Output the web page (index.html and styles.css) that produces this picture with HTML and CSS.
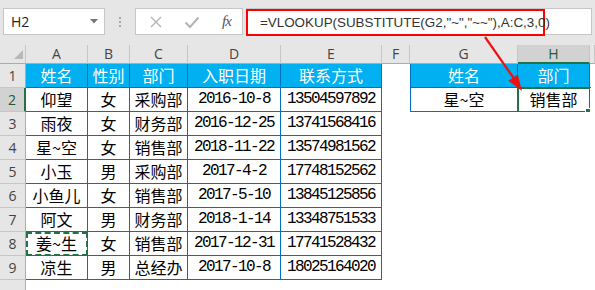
FILE: index.html
```html
<!DOCTYPE html>
<html lang="zh-CN">
<head>
<meta charset="utf-8">
<title>VLOOKUP</title>
<link rel="stylesheet" href="styles.css">
</head>
<body>
<div class="topbar">
  <div class="namebox"><span>H2</span><svg width="8" height="5" viewBox="0 0 8 5"><path d="M0 0H8L4 4.5Z" fill="#777"/></svg></div>
  <div class="sep"><i></i><i></i><i></i></div>
  <div class="fxbox">
    <svg class="ic" width="14" height="14" viewBox="0 0 14 14"><path d="M2 2L12 12M12 2L2 12" stroke="#b4b4b4" stroke-width="1.4" fill="none"/></svg>
    <svg class="ic" width="16" height="14" viewBox="0 0 16 14"><path d="M1.5 7.5L6 12L14.5 2.5" stroke="#b4b4b4" stroke-width="2" fill="none"/></svg>
    <span class="fx">fx</span>
  </div>
  <div class="formula"><div class="redbox">=VLOOKUP(SUBSTITUTE(G2,"~","~~"),A:C,3,0)</div></div>
</div>
<div class="sheet">
  <div class="corner"><svg width="9" height="9" viewBox="0 0 9 9"><path d="M9 0V9H0Z" fill="#b8b8b8"/></svg></div>
  <div class="ch">A</div><div class="ch">B</div><div class="ch">C</div><div class="ch">D</div><div class="ch">E</div><div class="ch">F</div><div class="ch">G</div><div class="ch sel">H</div><div class="ch"></div>

  <div class="rh">1</div>
  <div class="c th">姓名</div><div class="c th">性别</div><div class="c th">部门</div><div class="c th">入职日期</div><div class="c th">联系方式</div><div class="c"></div><div class="c th gl">姓名</div><div class="c th">部门</div><div class="c"></div>

  <div class="rh rsel">2</div>
  <div class="c t">仰望</div><div class="c t">女</div><div class="c t">采购部</div><div class="c t n">2016-10-8</div><div class="c t n">13504597892</div><div class="c"></div><div class="c t gl">星~空</div><div class="c t active">销售部<span class="handle"></span></div><div class="c"></div>

  <div class="rh">3</div>
  <div class="c t">雨夜</div><div class="c t">女</div><div class="c t">财务部</div><div class="c t n">2016-12-25</div><div class="c t n">13741568416</div><div class="c"></div><div class="c"></div><div class="c"></div><div class="c"></div>

  <div class="rh">4</div>
  <div class="c t">星~空</div><div class="c t">女</div><div class="c t">销售部</div><div class="c t n">2018-11-22</div><div class="c t n">13574981562</div><div class="c"></div><div class="c"></div><div class="c"></div><div class="c"></div>

  <div class="rh">5</div>
  <div class="c t">小玉</div><div class="c t">男</div><div class="c t">采购部</div><div class="c t n">2017-4-2</div><div class="c t n">17748152562</div><div class="c"></div><div class="c"></div><div class="c"></div><div class="c"></div>

  <div class="rh">6</div>
  <div class="c t">小鱼儿</div><div class="c t">女</div><div class="c t">销售部</div><div class="c t n">2017-5-10</div><div class="c t n">13845125856</div><div class="c"></div><div class="c"></div><div class="c"></div><div class="c"></div>

  <div class="rh">7</div>
  <div class="c t">阿文</div><div class="c t">男</div><div class="c t">财务部</div><div class="c t n">2018-1-14</div><div class="c t n">13348751533</div><div class="c"></div><div class="c"></div><div class="c"></div><div class="c"></div>

  <div class="rh">8</div>
  <div class="c t copy">姜~生</div><div class="c t">女</div><div class="c t">销售部</div><div class="c t n">2017-12-31</div><div class="c t n">17741528432</div><div class="c"></div><div class="c"></div><div class="c"></div><div class="c"></div>

  <div class="rh">9</div>
  <div class="c t">凉生</div><div class="c t">男</div><div class="c t">总经办</div><div class="c t n">2017-10-8</div><div class="c t n">18025164020</div><div class="c"></div><div class="c"></div><div class="c"></div><div class="c"></div>

  <div class="rh"></div>
  <div class="c"></div><div class="c"></div><div class="c"></div><div class="c"></div><div class="c"></div><div class="c"></div><div class="c"></div><div class="c"></div><div class="c"></div>
</div>
<svg class="arrow" width="595" height="290" viewBox="0 0 595 290">
  <path d="M485 37L515 80" stroke="#f01010" stroke-width="2.2" fill="none"/>
  <path d="M522 91L517.7 74.6L508.5 80.8Z" fill="#f01010"/>
</svg>
</body>
</html>
```
FILE: styles.css
```css
html, body {
  margin: 0;
  padding: 0;
}
body {
  width: 595px;
  height: 290px;
  overflow: hidden;
  background: #ffffff;
  position: relative;
  font-family: "Noto Sans CJK SC", sans-serif;
}
.topbar {
  height: 45px;
  box-sizing: border-box;
  background: #e6e6e6;
  display: flex;
  align-items: flex-start;
  padding: 8px 3px 0 3px;
  font-family: "Open Sans", "Liberation Sans", sans-serif;
}
.namebox {
  width: 102px;
  height: 27px;
  box-sizing: border-box;
  background: #fff;
  border: 1px solid #c6c6c6;
  display: flex;
  align-items: center;
  justify-content: space-between;
  padding: 0 6px 0 7px;
  font-size: 14px;
  color: #222;
}
.sep {
  width: 30px;
  height: 27px;
  display: flex;
  flex-direction: column;
  align-items: center;
  justify-content: center;
  gap: 2px;
}
.sep i {
  display: block;
  width: 2px;
  height: 2px;
  background: #a8a8a8;
}
.fxbox {
  width: 108px;
  height: 27px;
  box-sizing: border-box;
  background: #fff;
  border: 1px solid #c6c6c6;
  display: flex;
  align-items: center;
  padding-left: 13px;
}
.fxbox .ic:nth-child(2) {
  margin-left: 21px;
}
.fx {
  margin-left: 22px;
  font-family: "Liberation Serif", serif;
  font-style: italic;
  font-size: 15px;
  color: #555;
  letter-spacing: -1px;
}
.formula {
  flex: 1;
  margin-left: 3px;
  height: 27px;
  box-sizing: border-box;
  background: #fff;
  border: 1px solid #c6c6c6;
  border-left: none;
}
.redbox {
  width: 299px;
  height: 27px;
  box-sizing: border-box;
  border: 2px solid #ff0000;
  padding-left: 12px;
  font-family: "Liberation Sans", sans-serif;
  font-size: 13.4px;
  line-height: 23px;
  color: #333;
  white-space: nowrap;
}
.sheet {
  display: grid;
  grid-template-columns: 26px 62px 42px 58px 93px 101px 28px 108px 72px 1fr;
  grid-template-rows: 19px repeat(10, 24px);
}
.corner {
  background: #e6e6e6;
  border-right: 1px solid #c6c6c6;
  border-bottom: 1px solid #ababab;
  display: flex;
  align-items: flex-end;
  justify-content: flex-end;
  padding: 0 2px 4px 0;
}
.ch {
  background: #e6e6e6;
  border-right: 1px solid #c6c6c6;
  border-bottom: 1px solid #ababab;
  font-family: "Open Sans", "Liberation Sans", sans-serif;
  font-size: 14px;
  line-height: 18px;
  text-align: center;
  color: #444;
}
.ch.sel {
  background: #d2d2d2;
  border-bottom: 2px solid #217346;
  color: #1d5a37;
}
.rh {
  background: #e6e6e6;
  border-right: 1px solid #ababab;
  border-bottom: 1px solid #c6c6c6;
  font-family: "Open Sans", "Liberation Sans", sans-serif;
  font-size: 14px;
  line-height: 24px;
  text-align: center;
  color: #444;
}
.rh.rsel {
  background: #d2d2d2;
  border-right: 2px solid #217346;
  color: #1d5a37;
}
.c {
  background: #fff;
  font-size: 16px;
  line-height: 23px;
  text-align: center;
  color: #000;
  white-space: nowrap;
  overflow: hidden;
  position: relative;
}
.t {
  border-right: 1px solid #0070c0;
  border-bottom: 1px solid #0070c0;
}
.th {
  background: #00b0f0;
  color: #fff;
  border-right: 1px solid #0070c0;
  border-bottom: 1px solid #0070c0;
}
.gl {
  border-left: 1px solid #0070c0;
}
.n {
  font-family: "Liberation Mono", monospace;
  font-size: 16px;
  letter-spacing: -1.6px;
  line-height: 23px;
}
.active {
  outline: 2px solid #217346;
  outline-offset: -1px;
  overflow: visible;
}
.handle {
  position: absolute;
  right: -3px;
  bottom: -4px;
  width: 5px;
  height: 5px;
  background: #217346;
  border: 1px solid #fff;
}
.copy {
  outline: 2px dashed #217346;
  outline-offset: -2px;
}
.arrow {
  position: absolute;
  left: 0;
  top: 0;
  pointer-events: none;
}
```
